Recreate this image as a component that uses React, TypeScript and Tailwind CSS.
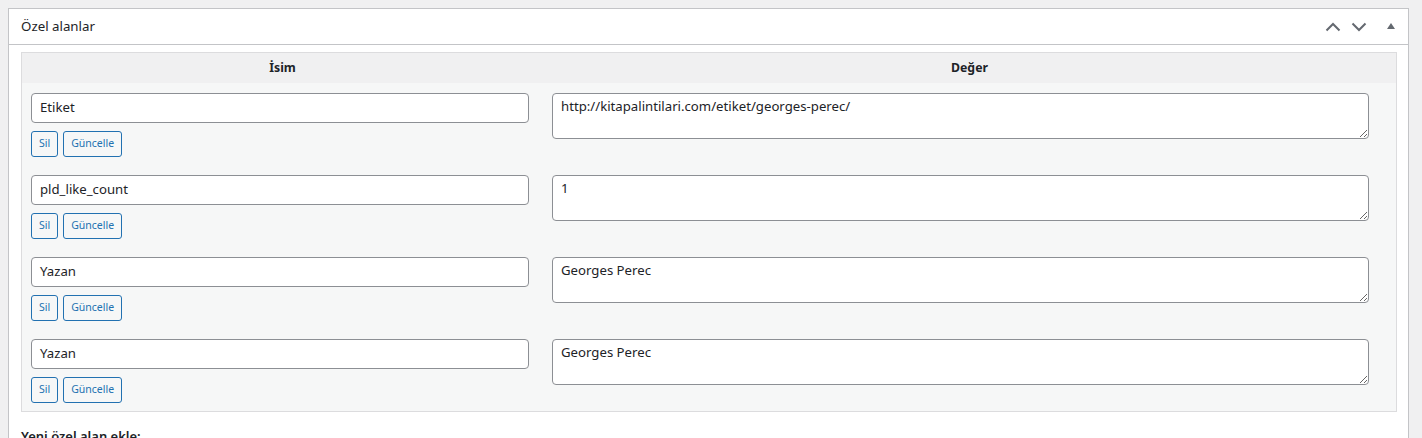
import React from "react";

const rows = [
  { key: "Etiket", value: "http://kitapalintilari.com/etiket/georges-perec/" },
  { key: "pld_like_count", value: "1" },
  { key: "Yazan", value: "Georges Perec" },
  { key: "Yazan", value: "Georges Perec" },
];

function ChevronUp() {
  return (
    <svg width="16" height="10" viewBox="0 0 16 10" fill="none">
      <path d="M1.5 8.5 L8 2 L14.5 8.5" stroke="#646970" strokeWidth="2" />
    </svg>
  );
}

function ChevronDown() {
  return (
    <svg width="16" height="10" viewBox="0 0 16 10" fill="none">
      <path d="M1.5 1.5 L8 8 L14.5 1.5" stroke="#646970" strokeWidth="2" />
    </svg>
  );
}

function TriangleUp() {
  return (
    <svg width="10" height="8" viewBox="0 0 10 8">
      <path d="M5 1 L9 7 L1 7 Z" fill="#646970" />
    </svg>
  );
}

function SmallButton({ label }: { label: string }) {
  return (
    <button className="h-[26px] rounded-[3px] border border-[#2271b1] bg-[#f6f7f7] px-[7px] text-[10.5px] text-[#2271b1]">
      {label}
    </button>
  );
}

export default function App() {
  return (
    <div
      className="h-[438px] w-[1422px] overflow-hidden bg-[#f0f0f1] pl-2 pt-2 text-[#1d2327]"
      style={{ fontFamily: '"Noto Sans", "Segoe UI", sans-serif' }}
    >
      <div className="h-[500px] w-[1401px] border border-[#c3c4c7] bg-white">
        <div className="flex h-[36px] items-center justify-between border-b border-[#c3c4c7] pl-3 pr-[4px]">
          <h2 className="text-[13.3px] leading-none">Özel alanlar</h2>
          <div className="flex items-center">
            <span className="flex h-[36px] w-[26px] items-center justify-center">
              <ChevronUp />
            </span>
            <span className="flex h-[36px] w-[26px] items-center justify-center">
              <ChevronDown />
            </span>
            <span className="ml-[6px] flex h-[36px] w-[26px] items-center justify-center pb-[1px]">
              <TriangleUp />
            </span>
          </div>
        </div>

        <div className="ml-3 mt-[7px] w-[1376px] border border-[#dcdcde] bg-[#f6f7f7]">
          <div className="flex h-[30px] items-center bg-[#f0f0f1] text-[12.3px] font-bold">
            <div className="w-[521px] text-center">İsim</div>
            <div className="flex-1 text-center">Değer</div>
          </div>
          {rows.map((r, i) => (
            <div key={i} className="flex h-[82px]">
              <div className="w-[521px] pl-[9px] pt-[10px]">
                <div className="flex h-[30px] w-[498px] items-center rounded-[4px] border border-[#8c8f94] bg-white px-2 text-[13.2px]">
                  {r.key}
                </div>
                <div className="mt-2 flex gap-[5px]">
                  <SmallButton label="Sil" />
                  <SmallButton label="Güncelle" />
                </div>
              </div>
              <div className="flex-1 pl-[9px] pt-[10px]">
                <textarea
                  readOnly
                  defaultValue={r.value}
                  className="block h-[46px] w-[817px] resize-y rounded-[4px] border border-[#8c8f94] bg-white px-2 py-[3px] text-[13.2px] leading-[1.45] text-[#1d2327] outline-none"
                />
              </div>
            </div>
          ))}
        </div>

        <p className="ml-3 mt-[15px] text-[13px] font-semibold">Yeni özel alan ekle:</p>
      </div>
    </div>
  );
}
